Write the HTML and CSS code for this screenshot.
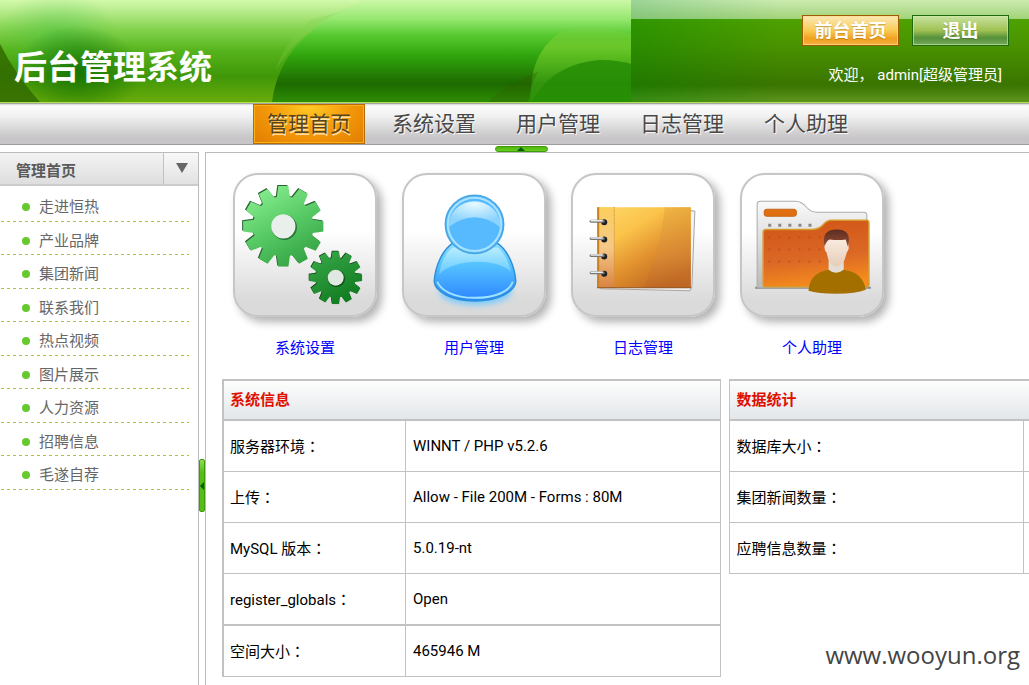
FILE: index.html
```html
<!DOCTYPE html>
<html lang="zh-CN">
<head>
<meta charset="utf-8">
<title>后台管理系统</title>
<link rel="stylesheet" href="styles.css">
</head>
<body>
<header class="banner">
  <svg class="banner-art" viewBox="0 0 631 102" width="631" height="102" aria-hidden="true">
    <defs>
      <linearGradient id="base" x1="0" y1="0" x2="0" y2="1">
        <stop offset="0" stop-color="#d2f9ab"/><stop offset=".12" stop-color="#b4ea88"/><stop offset=".3" stop-color="#80d14a"/>
        <stop offset=".5" stop-color="#56b31c"/><stop offset=".75" stop-color="#3f9708"/><stop offset="1" stop-color="#6aab0b"/>
      </linearGradient>
      <linearGradient id="lens" x1="0" y1="0" x2="0" y2="1">
        <stop offset="0" stop-color="#ccf8a6"/><stop offset=".18" stop-color="#98e872"/><stop offset=".35" stop-color="#55c92e"/>
        <stop offset=".55" stop-color="#30a40c"/><stop offset=".82" stop-color="#1d6a00"/><stop offset="1" stop-color="#2e8d04"/>
      </linearGradient>
      <linearGradient id="leaf" x1="0" y1="0" x2="0" y2="1">
        <stop offset="0" stop-color="#86d442" stop-opacity=".2"/><stop offset=".25" stop-color="#76cb2c" stop-opacity=".8"/><stop offset="1" stop-color="#2aa00a" stop-opacity=".5"/>
      </linearGradient>
      <linearGradient id="leafShade" x1="0" y1="0" x2="0" y2="1">
        <stop offset="0" stop-color="#1a8400" stop-opacity=".7"/><stop offset="1" stop-color="#228a00" stop-opacity=".5"/>
      </linearGradient>
      <radialGradient id="shade"><stop offset="0" stop-color="#0d6b00" stop-opacity=".8"/><stop offset="1" stop-color="#0d6b00" stop-opacity="0"/></radialGradient>
      <radialGradient id="mint"><stop offset="0" stop-color="#35b83c" stop-opacity=".4"/><stop offset="1" stop-color="#35b83c" stop-opacity="0"/></radialGradient>
    </defs>
    <rect width="631" height="102" fill="url(#base)"/>
    <ellipse cx="58" cy="36" rx="60" ry="44" fill="url(#mint)"/>
    <ellipse cx="78" cy="72" rx="64" ry="46" fill="url(#shade)"/>
    <path d="M0 44Q16 76 40 102H0Z" fill="#2f6600" opacity=".8"/>
    <path d="M362 0Q280 36 272 102H631V0Z" fill="url(#lens)"/>
    <path d="M310 20Q285 40 276 70Q300 30 340 12Z" fill="#7ad24d" opacity=".25"/>
    <path d="M532 78Q536 50 560 32Q595 24 631 34V102H530Z" fill="url(#leaf)"/>
    <path d="M548 80Q570 62 600 60Q618 60 631 64V102H530Z" fill="url(#leafShade)"/>
    <path d="M488 102Q508 82 538 72Q530 86 528 102Z" fill="#2f5c00" opacity=".3"/>
  </svg>
  <h1 class="brand">后台管理系统</h1>
  <div class="account">
    <div class="account-actions">
      <button class="btn btn-home" type="button">前台首页</button>
      <button class="btn btn-exit" type="button">退出</button>
    </div>
    <p class="welcome">欢迎， admin[超级管理员]</p>
  </div>
</header>

<nav class="mainnav">
  <a class="tab tab-active" href="#">管理首页</a>
  <a class="tab" href="#">系统设置</a>
  <a class="tab" href="#">用户管理</a>
  <a class="tab" href="#">日志管理</a>
  <a class="tab" href="#">个人助理</a>
</nav>
<div class="fold-bar">
  <button class="fold fold-top" type="button" aria-label="收起顶部"><svg width="8" height="4" viewBox="0 0 8 4"><path d="M0 4L4 0L8 4Z" fill="#0a5c12"/></svg></button>
</div>

<div class="frames">
  <aside class="sidebar">
    <div class="side-head">
      <h2 class="side-title">管理首页</h2>
      <button class="side-toggle" type="button" aria-label="折叠"><svg width="12" height="10" viewBox="0 0 12 10"><path d="M0 0H12L6 10Z" fill="#666"/></svg></button>
    </div>
    <ul class="side-list">
      <li><a href="#">走进恒热</a></li>
      <li><a href="#">产业品牌</a></li>
      <li><a href="#">集团新闻</a></li>
      <li><a href="#">联系我们</a></li>
      <li><a href="#">热点视频</a></li>
      <li><a href="#">图片展示</a></li>
      <li><a href="#">人力资源</a></li>
      <li><a href="#">招聘信息</a></li>
      <li><a href="#">毛遂自荐</a></li>
    </ul>
  </aside>
  <div class="gutter">
    <button class="fold fold-side" type="button" aria-label="收起侧栏"><svg width="4" height="8" viewBox="0 0 4 8"><path d="M4 0L0 4L4 8Z" fill="#0a5c12"/></svg></button>
  </div>
  <main class="content">
    <div class="shortcuts">
      <a class="shortcut" href="#">
        <span class="tile">
          <svg viewBox="0 0 143 143" aria-hidden="true">
            <defs>
              <linearGradient id="gearA" gradientUnits="userSpaceOnUse" x1="-20" y1="-36" x2="20" y2="36"><stop offset="0" stop-color="#83ea8b"/><stop offset=".5" stop-color="#56c964"/><stop offset="1" stop-color="#35a344"/></linearGradient>
              <linearGradient id="gearB" gradientUnits="userSpaceOnUse" x1="-20" y1="-36" x2="20" y2="36"><stop offset="0" stop-color="#35a546"/><stop offset="1" stop-color="#107a1e"/></linearGradient>
              <path id="pair" d="M-7 -26L-5 -40H5L7 -26V26L5 40H-5L-7 26Z"/>
              <clipPath id="cog">
                <circle r="30"/>
                <use href="#pair"/><use href="#pair" transform="rotate(30)"/><use href="#pair" transform="rotate(60)"/>
                <use href="#pair" transform="rotate(90)"/><use href="#pair" transform="rotate(120)"/><use href="#pair" transform="rotate(150)"/>
              </clipPath>
            </defs>
            <g transform="translate(50 53)">
              <g transform="translate(-1 -1)"><rect x="-42" y="-42" width="84" height="84" fill="#2a6433" clip-path="url(#cog)"/></g>
              <rect x="-42" y="-42" width="84" height="84" fill="url(#gearA)" clip-path="url(#cog)"/>
              <circle cx="1" cy="1" r="12.500" fill="#277736"/><circle r="12" fill="#e9efea"/>
            </g>
            <g transform="translate(102 104) scale(.66)">
              <g transform="translate(-1 -1)"><rect x="-42" y="-42" width="84" height="84" fill="#123f19" clip-path="url(#cog)"/></g>
              <rect x="-42" y="-42" width="84" height="84" fill="url(#gearB)" clip-path="url(#cog)"/>
              <circle cx="1" cy="1" r="13" fill="#0c5416"/><circle r="12" fill="#e0e8e2"/>
            </g>
          </svg>
        </span>
        <span>系统设置</span>
      </a>
      <a class="shortcut" href="#">
        <span class="tile">
          <svg viewBox="0 0 143 143" aria-hidden="true">
            <defs>
              <linearGradient id="torso" x1="0" y1="0" x2="0" y2="1"><stop offset="0" stop-color="#8fdcff"/><stop offset=".35" stop-color="#56c4ff"/><stop offset=".95" stop-color="#2f89ff"/></linearGradient>
              <radialGradient id="face" cx=".5" cy=".1" r=".7"><stop offset="0" stop-color="#e6faff"/><stop offset="1" stop-color="#8cd3fd"/></radialGradient>
              <linearGradient id="shine" x1="0" y1="0" x2="0" y2="1"><stop offset="0" stop-color="#c5f2ff"/><stop offset="1" stop-color="#6fceff"/></linearGradient>
              <filter id="soft" x="-20%" y="-50%" width="140%" height="200%"><feGaussianBlur stdDeviation="3"/></filter>
            </defs>
            <ellipse cx="73" cy="117" rx="36" ry="14" fill="#74cbff" filter="url(#soft)"/>
            <path d="M50 70C40 77 33 92 32 108C33 117 48 127 72 127C97 127 112 117 113 108C112 92 105 77 95 70Z" fill="url(#torso)" stroke="#2d8fd6" stroke-width="1.500"/>
            <path d="M50 74C43 80 38 90 37 101C50 85 94 84 108 98C106 88 102 80 95 74Z" fill="url(#shine)" opacity=".8"/>
            <path d="M35 108C38 116 51 124 72 124C94 124 107 117 110 108" fill="none" stroke="#9be4ff" stroke-width="2"/>
            <circle cx="72" cy="51" r="29" fill="#58b7fb" stroke="#48a7e2" stroke-width="1.500"/>
            <circle cx="72" cy="51" r="26.500" fill="#57baff" stroke="#a8e3ff" stroke-width="2"/>
            <path d="M46 54A26 26 0 1 1 98 54Q72 34 46 54Z" fill="url(#face)"/>
          </svg>
        </span>
        <span>用户管理</span>
      </a>
      <a class="shortcut" href="#">
        <span class="tile">
          <svg viewBox="0 0 143 143" aria-hidden="true">
            <defs>
              <linearGradient id="cover" x1="0" y1="0" x2=".7" y2="1"><stop offset="0" stop-color="#fdda6b"/><stop offset=".35" stop-color="#fbc34a"/><stop offset=".65" stop-color="#e2922f"/><stop offset="1" stop-color="#bd651f"/></linearGradient>
              <linearGradient id="fold" x1="0" y1="0" x2="0" y2="1"><stop offset="0" stop-color="#e5aa3c"/><stop offset=".6" stop-color="#d98b3a"/><stop offset="1" stop-color="#bd6526"/></linearGradient>
              <linearGradient id="spine" x1="0" y1="0" x2="0" y2="1"><stop offset="0" stop-color="#fbcf5c"/><stop offset=".5" stop-color="#f5c888"/><stop offset="1" stop-color="#d98342"/></linearGradient>
              <g id="ring"><circle cx="33" cy="0" r="3" fill="#222"/><path d="M20 -1H32" stroke="#777" stroke-width="3" stroke-linecap="round"/><path d="M20 -1.500H31" stroke="#eee" stroke-width="1.500" stroke-linecap="round"/></g>
            </defs>
            <path d="M116 37L123 38L120 113L118 117L30 115V112H116Z" fill="#f4f4f4" stroke="#a5a5a5"/>
            <rect x="26" y="34" width="93" height="80" fill="url(#cover)"/>
            <path d="M93 34H119V114H72Q90 70 93 34Z" fill="url(#fold)" opacity=".55"/>
            <rect x="26" y="34" width="17" height="80" fill="url(#spine)"/>
            <path d="M27 34V114" stroke="#c98120" stroke-width="2"/>
            <path d="M43 34V114" stroke="#cc8b35" stroke-dasharray="1 1"/>
            <path d="M26 114H119" stroke="#8f5423"/>
            <use href="#ring" y="49"/><use href="#ring" y="66"/><use href="#ring" y="83"/><use href="#ring" y="100"/>
          </svg>
        </span>
        <span>日志管理</span>
      </a>
      <a class="shortcut" href="#">
        <span class="tile">
          <svg viewBox="0 0 143 143" aria-hidden="true">
            <defs>
              <linearGradient id="back" x1="0" y1="0" x2="0" y2="1"><stop offset="0" stop-color="#fafafa"/><stop offset="1" stop-color="#b9b9b9"/></linearGradient>
              <linearGradient id="front" x1=".2" y1="0" x2=".4" y2="1"><stop offset="0" stop-color="#cf5516"/><stop offset=".6" stop-color="#dc6826"/><stop offset="1" stop-color="#f58c1c"/></linearGradient>
              <linearGradient id="skin" x1="0" y1="0" x2="0" y2="1"><stop offset="0" stop-color="#fdf2e8"/><stop offset="1" stop-color="#e5cdb8"/></linearGradient>
              <linearGradient id="hair" x1="0" y1="0" x2="0" y2="1"><stop offset="0" stop-color="#5c2c20"/><stop offset="1" stop-color="#944f36"/></linearGradient>
            </defs>
            <path d="M15 114H130" stroke="#888" stroke-width="2"/>
            <path d="M17 114V31Q17 28 20 28H55Q61 28 66 34Q71 39 76 39H123Q126 39 126 42V114Z" fill="url(#back)" stroke="#aaa"/>
            <rect x="24" y="36" width="32" height="7" rx="3" fill="#e06f11" stroke="#c7661b"/>
            <path d="M28 52H78" stroke="#888" stroke-width="3" stroke-dasharray="3 7"/>
            <path d="M23 111V59Q23 56 26 56H72Q78 56 82 52Q86 47 91 47H126Q128 47 128 50V111Q128 113 125 113H26Q23 113 23 111Z" fill="url(#front)" stroke="#d89a2c" stroke-width="1.500"/>
            <path d="M28 64H80M28 76H80M28 88H80" stroke="#a9471a" stroke-width="2" stroke-dasharray="2 8" opacity=".5"/>
            <path d="M88 86H103V99Q95 106 88 99Z" fill="#e3ddd5"/>
            <path d="M68 117C69 104 76 98 88 96Q95 102 103 96C116 98 123 104 125 116Q115 120 96 120Q77 120 68 117Z" fill="#a37000"/>
            <path d="M84 66Q84 60 96 60Q107 60 107 66L108 75Q107 78 106 79Q103 93 96 93Q88 92 86 79Q83 77 84 66Z" fill="url(#skin)"/>
            <path d="M84 73Q80 56 96 56Q112 56 107 73L105 66Q98 67 89 66Q86 67 84 73Z" fill="url(#hair)"/>
          </svg>
        </span>
        <span>个人助理</span>
      </a>
    </div>
    <div class="panels">
      <table class="grid grid-system">
        <thead><tr><th colspan="2">系统信息</th></tr></thead>
        <tbody>
          <tr><td class="name">服务器环境<span class="colon" lang="zh-TW">：</span></td><td>WINNT / PHP v5.2.6</td></tr>
          <tr><td class="name">上传<span class="colon" lang="zh-TW">：</span></td><td>Allow - File 200M - Forms : 80M</td></tr>
          <tr><td class="name">MySQL 版本<span class="colon" lang="zh-TW">：</span></td><td>5.0.19-nt</td></tr>
          <tr><td class="name">register_globals<span class="colon" lang="zh-TW">：</span></td><td>Open</td></tr>
          <tr class="total"><td class="name">空间大小<span class="colon" lang="zh-TW">：</span></td><td>465946 M</td></tr>
        </tbody>
      </table>
      <table class="grid grid-stats">
        <thead><tr><th colspan="2">数据统计</th></tr></thead>
        <tbody>
          <tr><td>数据库大小<span class="colon" lang="zh-TW">：</span></td><td class="value"></td></tr>
          <tr><td>集团新闻数量<span class="colon" lang="zh-TW">：</span></td><td class="value"></td></tr>
          <tr><td>应聘信息数量<span class="colon" lang="zh-TW">：</span></td><td class="value"></td></tr>
        </tbody>
      </table>
    </div>
  </main>
</div>
<div class="watermark">www.wooyun.org</div>
</body>
</html>
```
FILE: styles.css
```css
* { box-sizing: border-box; }

body {
  margin: 0;
  min-height: 100vh;
  display: flex;
  flex-direction: column;
  position: relative;
  background: #fff;
  color: #000;
  font: 15px/20px Roboto, "Noto Sans CJK SC", sans-serif;
}

a { text-decoration: none; }
h1, h2, p, ul { margin: 0; padding: 0; }
button { padding: 0; border: 0; font: inherit; cursor: pointer; }

.banner {
  position: relative;
  display: flex;
  justify-content: space-between;
  height: 103px;
  border-bottom: 1px solid #aee24a;
  background:
    linear-gradient(90deg, rgba(110, 190, 130, .5) 631px, rgba(200, 235, 180, .2) 780px) 0 0 / 100% 19px no-repeat,
    linear-gradient(90deg, rgba(0, 130, 0, .4) 631px, rgba(90, 140, 0, .1) 780px) 0 19px no-repeat,
    linear-gradient(#cdebb0 0, #98cc6a 19px, #4da400 19px, #489400 45px, #367200 85px, #5c9420 101px);
}

.banner-art { position: absolute; left: 0; top: 0; }

.brand {
  position: relative;
  padding: 44px 0 0 14px;
  color: #fff;
  font-size: 33px;
  line-height: 48px;
  font-weight: 700;
}

.account {
  position: relative;
  display: flex;
  flex-direction: column;
  gap: 19px;
  padding: 15px 20px 0 0;
}

.account-actions { display: flex; gap: 13px; }

.btn {
  width: 97px;
  height: 31px;
  color: #fff;
  font-size: 18px;
  line-height: 27px;
  font-weight: 700;
  text-shadow: 0 1px 1px rgba(80, 60, 0, .3);
}

.btn-home {
  border: 1px solid #a05a00;
  background: linear-gradient(#fbe9b8, #f9cb55 50%, #f0a01e 78%, #f5b245);
  box-shadow: inset 0 0 0 1px rgba(255, 220, 140, .7);
}

.btn-exit {
  border: 1px solid #1d6a10;
  background: linear-gradient(#c8e2a0, #9fc152 50%, #55903a 75%, #76a95e);
  box-shadow: inset 0 0 0 1px rgba(210, 235, 170, .6);
}

.welcome { padding-right: 7px; color: #fff; text-align: right; white-space: pre; }

.mainnav {
  display: flex;
  gap: 12px;
  height: 42px;
  padding-left: 253px;
  border-top: 1px solid #a5a5a5;
  border-bottom: 1px solid #9d9b9d;
  background: linear-gradient(#d5d5d5 0, #fcfcfc 2px, #f1f1f1 30%, #c7c5c7 85%, #c7c5c7);
}

.tab {
  width: 112px;
  color: #484848;
  font-size: 21px;
  line-height: 40px;
  text-align: center;
  text-shadow: 1px 1px 0 rgba(255, 255, 255, .9);
}
.tab + .tab { padding-left: 2px; }

.tab-active {
  border: 1px solid #b96a00;
  background: radial-gradient(ellipse at 50% 0, #ffcc28, #f59a0a 50%, #e07c00);
  box-shadow: inset 0 0 0 1px #f9b216;
  color: #554520;
  line-height: 38px;
  text-shadow: 1px 2px 0 rgba(255, 235, 190, .85);
}

.fold-bar { display: flex; justify-content: center; height: 7px; padding: 1px 0 0 13px; }

.fold {
  display: flex;
  align-items: center;
  justify-content: center;
  border: 1px solid #3d9b0c;
  background: linear-gradient(#52b40f, #68cf20);
}
.fold-top { width: 53px; height: 6px; border-radius: 3px; }
.fold-side { width: 6px; height: 53px; border-radius: 2px; background: linear-gradient(#8ade58, #55bd14 25%); }

.frames { flex: 1; display: flex; min-width: 0; }

.sidebar {
  flex: none;
  width: 199px;
  border-top: 1px solid #bbb;
  border-right: 1px solid #bbb;
}

.side-head {
  display: flex;
  justify-content: space-between;
  height: 33px;
  border-bottom: 2px solid #ccc;
  background: linear-gradient(#f3f3f3, #dedede);
}

.side-title { padding: 7px 0 0 16px; color: #5a5a5a; font-size: 15px; line-height: 22px; font-weight: 700; }

.side-toggle {
  width: 35px;
  padding: 0 0 2px 2px;
  border-left: 1px solid #c2c2c2;
  background: linear-gradient(#f8f8f8, #e2e2e2);
}

.side-list { padding: 2px 9px 0 1px; list-style: none; }

.side-list li {
  height: 33px;
  background: repeating-linear-gradient(90deg, #abc04c 0 3px, transparent 3px 6px) 0 100% / 100% 1px no-repeat;
}
.side-list li:nth-child(odd) { height: 34px; }

.side-list a { display: flex; align-items: center; gap: 9px; padding: 8px 0 0 21px; color: #666; line-height: 22px; }
.side-list a::before { content: ""; width: 8px; height: 8px; border-radius: 50%; background: #66c92e; }

.gutter { flex: none; width: 6px; padding-top: 307px; }

.content {
  flex: 1;
  min-width: 0;
  padding: 20px 0 8px 16px;
  border-top: 1px solid #bbb;
  border-left: 1px solid #bbb;
}

.shortcuts { display: flex; gap: 3px; }

.shortcut {
  flex: none;
  display: flex;
  flex-direction: column;
  align-items: center;
  gap: 20px;
  width: 166px;
  color: #00f;
  line-height: 22px;
}

.tile {
  width: 144px;
  height: 144px;
  border: 2px solid #c6c6c6;
  border-radius: 25px;
  background: linear-gradient(#fff 40%, #dadada 90%);
  box-shadow: 5px 5px 8px rgba(0, 0, 0, .3);
}
.tile svg { display: block; margin: -2px; width: 144px; height: 144px; }

.panels {
  display: grid;
  grid-template-columns: 5fr 3fr;
  align-items: start;
  gap: 8px;
  padding-top: 20px;
}

.grid {
  width: 100%;
  border: 1px solid #c2c2c2;
  border-top-width: 2px;
  border-spacing: 0;
}
.grid-system { border-left-width: 2px; }
.grid-stats { border-right: 0; }

.grid th {
  height: 40px;
  padding: 0 6px;
  border-bottom: 2px solid #c2c2c2;
  background: linear-gradient(#fdfdfd, #e3e7ea);
  color: #e01000;
  font-weight: 700;
  text-align: left;
}

.grid td { height: 51px; padding: 0 7px; border-bottom: 1px solid #c2c2c2; }
.grid td:first-child { padding-left: 6px; }
.grid td + td { border-left: 1px solid #c2c2c2; }
.grid tbody tr:last-child td { height: 50px; border-bottom: 0; }
.grid tbody tr.total td { height: 51px; border-top: 1px solid #c2c2c2; }
.grid-system .name { width: 181px; }
.grid-stats td.value { width: 6px; padding: 0; }

.colon { font-family: "Noto Sans CJK TC", sans-serif; }

.watermark {
  position: absolute;
  right: 9px;
  bottom: 13px;
  color: #444;
  font: 24px/34px "Open Sans", "Noto Sans", sans-serif;
}
```
